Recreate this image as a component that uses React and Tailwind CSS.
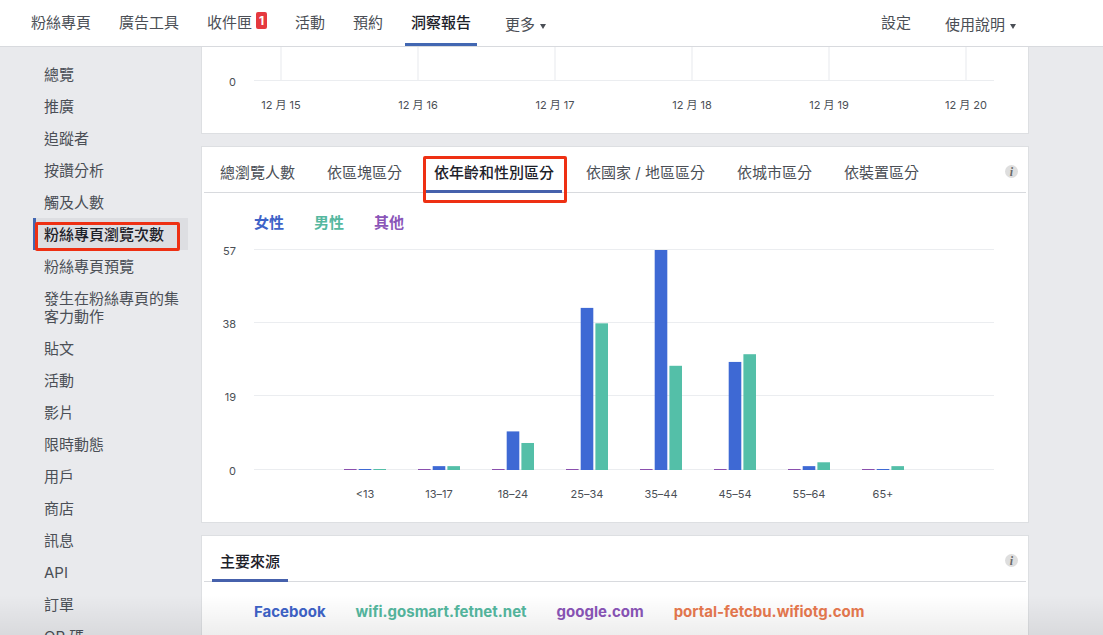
import React from "react";

const BLUE = "#3e69d4";
const GREEN = "#54bfa8";
const PURPLE = "#8a4fae";

const leftNav = [
	{ label: "粉絲專頁" },
	{ label: "廣告工具" },
	{ label: "收件匣", badge: 1 },
	{ label: "活動" },
	{ label: "預約" },
	{ label: "洞察報告", active: true },
];

const sideItems = [
	"總覽",
	"推廣",
	"追蹤者",
	"按讚分析",
	"觸及人數",
	"粉絲專頁瀏覽次數",
	"粉絲專頁預覽",
	"發生在粉絲專頁的集客力動作",
	"貼文",
	"活動",
	"影片",
	"限時動態",
	"用戶",
	"商店",
	"訊息",
	"API",
	"訂單",
	"QR 碼",
];

const viewTabs = [
	"總瀏覽人數",
	"依區塊區分",
	"依年齡和性別區分",
	"依國家 / 地區區分",
	"依城市區分",
	"依裝置區分",
];

const genders = [
	{ label: "女性", color: "text-[#3e63c8]" },
	{ label: "男性", color: "text-[#55b89f]" },
	{ label: "其他", color: "text-[#8a55b8]" },
];

const sources = [
	{ label: "Facebook", color: "text-[#3e63c8]" },
	{ label: "wifi.gosmart.fetnet.net", color: "text-[#55b89f]" },
	{ label: "google.com", color: "text-[#8a55b8]" },
	{ label: "portal-fetcbu.wifiotg.com", color: "text-[#e8794f]" },
];

const ageGroups = [
	{ label: "<13", other: 0, female: 0, male: 0 },
	{ label: "13–17", other: 0, female: 1, male: 1 },
	{ label: "18–24", other: 0, female: 10, male: 7 },
	{ label: "25–34", other: 0, female: 42, male: 38 },
	{ label: "35–44", other: 0, female: 57, male: 27 },
	{ label: "45–54", other: 0, female: 28, male: 30 },
	{ label: "55–64", other: 0, female: 1, male: 2 },
	{ label: "65+", other: 0, female: 0, male: 1 },
];

const days = [15, 16, 17, 18, 19, 20];

// --- Top bar ---
const Caret = () => (
	<svg className="w-[6px] h-[5px] mt-[2px]" viewBox="0 0 6 5" fill="currentColor">
		<path d="M0 0h6L3 5z" />
	</svg>
);

const TopBar = () => (
	<header className="relative z-10 flex shrink-0 h-[47px] justify-between bg-white border-b border-[#d8dade] pl-[25px] pr-[87px]">
		<nav className="flex gap-4">
			{leftNav.map((item) => (
				<a
					key={item.label}
					href="#"
					className={
						item.active
							? "flex items-center px-[6px] pt-[3px] border-b-3 border-[#4267b2] font-medium text-[#1d2129]"
							: "flex items-center px-[6px]"
					}
				>
					{item.label}
					{item.badge && (
						<span className="ml-1 mb-[5px] w-[11px] h-[17px] rounded-xs bg-[#e5393f] text-white text-xs leading-[17px] font-bold text-center">
							{item.badge}
						</span>
					)}
				</a>
			))}
			<button type="button" className="flex items-center gap-[5px] ml-3 pt-1">
				更多 <Caret />
			</button>
		</nav>
		<div className="flex gap-[34px]">
			<a href="#" className="flex items-center">
				設定
			</a>
			<button type="button" className="flex items-center gap-[5px] pt-1">
				使用說明 <Caret />
			</button>
		</div>
	</header>
);

// --- Sidebar ---
const Sidebar = () => (
	<nav className="w-[155px] shrink-0 pt-[11px]">
		<ul>
			{sideItems.map((label) => {
				const active = label === "粉絲專頁瀏覽次數";
				return (
					<li key={label} className="relative">
						<a
							href="#"
							className={
								active
									? "block border-l-3 border-[#4267b2] bg-[#dddee2] pl-2 pt-2 pb-[6px] leading-[18px] font-medium text-[#1d2129]"
									: "block border-l-3 border-transparent px-2 pt-2 pb-[6px] leading-[18px]"
							}
						>
							{label}
						</a>
						{active && (
							<span className="absolute left-[2px] right-2 top-1 -bottom-px border-3 border-[#ee3013] rounded-xs pointer-events-none" />
						)}
					</li>
				);
			})}
		</ul>
	</nav>
);

const InfoIcon = () => (
	<button
		type="button"
		aria-label="資訊"
		className="flex items-center justify-center self-center w-[13px] h-[13px] mt-1 mr-2 rounded-full bg-[#dedede] font-['Liberation_Serif',serif] text-xs leading-none font-bold italic text-[#6a6a6a]"
	>
		i
	</button>
);

const CardTabs = ({ tabs, selected, marked }) => (
	<div className="flex justify-between h-[46px] mx-[2px] border-b border-[#d8dade]">
		<div className="flex gap-4 pl-2 -mb-px">
			{tabs.map((tab) => (
				<button
					key={tab}
					type="button"
					className={
						tab === selected
							? "relative px-2 pt-[9px] border-b-3 border-[#4661ac] font-medium text-[#1d2129]"
							: "px-2 pt-[6px]"
					}
				>
					{tab}
					{tab === selected && marked && (
						<span className="absolute -left-[3px] -right-[5px] top-[9px] -bottom-[13px] border-3 border-[#ee3013] rounded-xs pointer-events-none" />
					)}
				</button>
			))}
		</div>
		<InfoIcon />
	</div>
);

const Legend = ({ items }) => (
	<ul className="flex gap-[30px] pl-[52px] pt-[21px] leading-[18px] font-bold">
		{items.map((item) => (
			<li key={item.label} className={item.color}>
				{item.label}
			</li>
		))}
	</ul>
);

// --- Charts ---
const TimelineChart = () => (
	<svg className="block w-full" viewBox="0 0 826 86" fontSize="11" fill="#4b4f56">
		{days.map((day, i) => (
			<g key={day}>
				<rect x={78 + i * 137} y="0" width="2" height="33" fill="#f3f4f6" />
				<text x={79 + i * 137} y="62" textAnchor="middle">
					12 月 {day}
				</text>
			</g>
		))}
		<rect x="52" y="33" width="740" height="1" fill="#ebedf0" />
		<text x="34" y="39" textAnchor="end">
			0
		</text>
	</svg>
);

const BASE = 232;
const PLOT = 220;
const MAX = 57;

const Bar = ({ x, value, color }) => {
	const h = Math.max(1, (value / MAX) * PLOT);
	return <rect x={x} y={BASE - h} width="12.6" height={h} fill={color} />;
};

const AgeChart = () => (
	<svg className="block w-full mt-[6px]" viewBox="0 0 826 284" fontSize="11" fill="#4b4f56">
		{[57, 38, 19, 0].map((tick) => {
			const y = Math.floor(BASE - 1 - (tick / MAX) * PLOT);
			return (
				<g key={tick}>
					<rect x="52" y={y} width="740" height="1" fill="#ebedf0" />
					<text x="34" y={y + 6} textAnchor="end">
						{tick}
					</text>
				</g>
			);
		})}
		{ageGroups.map((group, i) => {
			const x = 142 + i * 74;
			return (
				<g key={group.label}>
					<Bar x={x} value={group.other} color={PURPLE} />
					<Bar x={x + 14.7} value={group.female} color={BLUE} />
					<Bar x={x + 29.4} value={group.male} color={GREEN} />
					<text x={x + 21} y="260" textAnchor="middle">
						{group.label}
					</text>
				</g>
			);
		})}
	</svg>
);

export default function App() {
	return (
		<div className="relative flex flex-col h-screen overflow-hidden bg-[#e9eaed] text-[#4b4f56] text-[15px] font-[Inter,'Noto_Sans_CJK_TC',sans-serif]">
			<TopBar />
			<div className="flex items-start gap-[13px] pl-[33px] pr-[74px] min-h-0">
				<Sidebar />
				<main className="flex-1 flex flex-col gap-3">
					<section className="bg-white border border-t-0 border-[#dddfe2]">
						<TimelineChart />
					</section>
					<section className="bg-white border border-[#dddfe2]">
						<CardTabs tabs={viewTabs} selected="依年齡和性別區分" marked />
						<Legend items={genders} />
						<AgeChart />
					</section>
					<section className="bg-white border border-[#dddfe2] pb-8">
						<CardTabs tabs={["主要來源"]} selected="主要來源" />
						<Legend items={sources} />
					</section>
				</main>
			</div>
			<div className="absolute inset-x-0 bottom-0 h-10 bg-linear-to-b from-transparent to-black/7 pointer-events-none" />
		</div>
	);
}
